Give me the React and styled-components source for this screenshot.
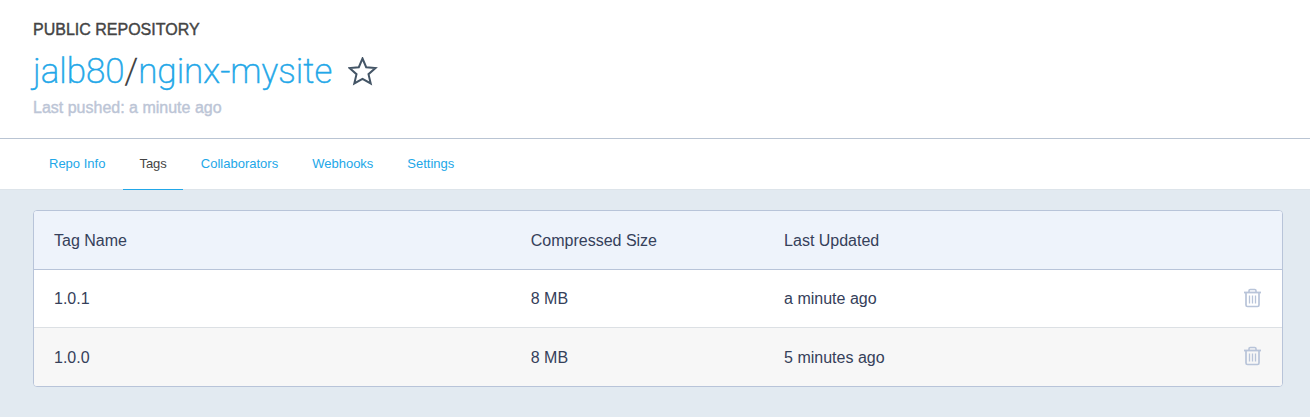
import React from "react";
import styled, { createGlobalStyle } from "styled-components";

const GlobalStyle = createGlobalStyle`
  *, *::before, *::after { box-sizing: border-box; }
  html { background: #e2eaf1; }
  body {
    margin: 0;
    font-family: "Liberation Sans", Arial, sans-serif;
    font-size: 16px;
    line-height: 20px;
    color: #35405a;
  }
  a { color: #22a7e8; text-decoration: none; }
`;

const Header = styled.header`
  padding: 20px 33px;
  background: #fff;
  border-bottom: 1px solid #b9c4d3;
`;

const Eyebrow = styled.div`
  color: #444;
  -webkit-text-stroke: 0.4px #444;
`;

const TitleRow = styled.div`
  display: flex;
  align-items: center;
  gap: 16px;
  height: 58px;
  padding-top: 6px;
`;

const Title = styled.h1`
  margin: 0;
  font-family: Roboto, "Liberation Sans", sans-serif;
  font-size: 35px;
  font-weight: 200;
  line-height: 44px;
  color: #333;
  -webkit-text-stroke: 0.5px currentColor;
`;

const StarButton = styled.button`
  display: flex;
  padding: 0;
  border: 0;
  background: none;
  color: #445566;
  cursor: pointer;
`;

const Pushed = styled.div`
  color: #bcc5d6;
  -webkit-text-stroke: 0.4px #bcc5d6;
`;

const Tabs = styled.nav`
  display: flex;
  gap: 2px;
  padding: 0 33px;
  background: #fff;
  border-bottom: 1px solid #dde4ea;
`;

const Tab = styled.a`
  padding: 15px 16px;
  margin-bottom: -1px;
  font-size: 13px;
  border-bottom: 1px solid ${(p) => (p.$active ? "#22a7e8" : "transparent")};
  && { color: ${(p) => (p.$active ? "#444" : "#22a7e8")}; }
`;

const Content = styled.main`
  padding: 20px 27px 30px 33px;
`;

const Card = styled.div`
  overflow: hidden;
  background: #fff;
  border: 1px solid #b8c4d9;
  border-radius: 4px;
`;

const Table = styled.table`
  width: 100%;
  table-layout: fixed;
  border-collapse: separate;
  border-spacing: 0;
  text-align: left;
`;

const Col = styled.col`
  width: ${(p) => p.$width};
`;

const HeadCell = styled.th`
  height: 59px;
  padding: 2px 20px 0;
  font-weight: 400;
  background: #eef3fb;
  border-bottom: 1px solid #b8c4d9;
`;

const Row = styled.tr`
  background: ${(p) => (p.$striped ? "#f7f7f7" : "#fff")};
`;

const Cell = styled.td`
  height: 58px;
  padding: 1px 20px 0;
  ${Row}:not(:last-child) > & { border-bottom: 1px solid #dce0e4; }
`;

const DeleteButton = styled.button`
  display: flex;
  margin-left: auto;
  padding: 0 0 3px;
  border: 0;
  background: none;
  color: #b8c4d9;
  cursor: pointer;
`;

const StarIcon = () => (
  <svg width="30" height="30" viewBox="0 0 30 30" fill="none" stroke="currentColor" strokeWidth="2" aria-hidden="true">
    <path d="M14.5 1.5L18.2 10.2L27.5 11L20.5 17.2L22.7 26.4L14.5 21.8L6.3 26.4L8.5 17.2L1.5 11L10.8 10.2Z" />
  </svg>
);

const TrashIcon = () => (
  <svg width="18" height="20" viewBox="0 0 18 20" fill="none" stroke="currentColor" aria-hidden="true">
    <path d="M0 4.5H17" strokeWidth="1.8" />
    <path d="M5 4V2.8Q5 1.5 6.3 1.5H10.7Q12 1.5 12 2.8V4" strokeWidth="1.6" />
    <path d="M2 5V17Q2 18.5 3.5 18.5H13.5Q15 18.5 15 17V5" strokeWidth="1.7" />
    <path d="M5.5 7.5V15.5M8.5 7.5V15.5M11.5 7.5V15.5" strokeWidth="1.3" />
  </svg>
);

const tabs = ["Repo Info", "Tags", "Collaborators", "Webhooks", "Settings"];

const tags = [
  { name: "1.0.1", size: "8 MB", updated: "a minute ago" },
  { name: "1.0.0", size: "8 MB", updated: "5 minutes ago" },
];

export default function App() {
  return (
    <>
      <GlobalStyle />
      <Header>
        <Eyebrow>PUBLIC REPOSITORY</Eyebrow>
        <TitleRow>
          <Title>
            <a href="#owner">jalb80</a>/<a href="#repo">nginx-mysite</a>
          </Title>
          <StarButton type="button" aria-label="Star repository">
            <StarIcon />
          </StarButton>
        </TitleRow>
        <Pushed>Last pushed: a minute ago</Pushed>
      </Header>
      <Tabs>
        {tabs.map((t) => (
          <Tab key={t} href={`#${t}`} $active={t === "Tags"} aria-current={t === "Tags" ? "page" : undefined}>
            {t}
          </Tab>
        ))}
      </Tabs>
      <Content>
        <Card>
          <Table>
            <colgroup>
              <Col $width="38.2%" />
              <Col $width="20.3%" />
              <Col />
              <Col $width="60px" />
            </colgroup>
            <thead>
              <tr>
                <HeadCell scope="col">Tag Name</HeadCell>
                <HeadCell scope="col">Compressed Size</HeadCell>
                <HeadCell scope="col">Last Updated</HeadCell>
                <HeadCell as="td" />
              </tr>
            </thead>
            <tbody>
              {tags.map((t, i) => (
                <Row key={t.name} $striped={i % 2 === 1}>
                  <Cell>{t.name}</Cell>
                  <Cell>{t.size}</Cell>
                  <Cell>{t.updated}</Cell>
                  <Cell>
                    <DeleteButton type="button" aria-label={`Delete tag ${t.name}`}>
                      <TrashIcon />
                    </DeleteButton>
                  </Cell>
                </Row>
              ))}
            </tbody>
          </Table>
        </Card>
      </Content>
    </>
  );
}
